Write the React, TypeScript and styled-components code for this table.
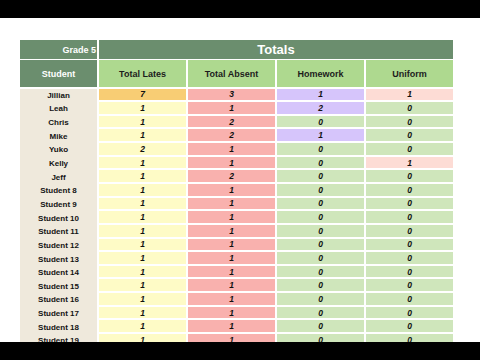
import React from "react";
import styled, { createGlobalStyle } from "styled-components";

type Tone = "yellow" | "orange" | "red" | "purple" | "green" | "pink";

interface Student {
  name: string;
  lates: number;
  absent: number;
  homework: number;
  uniform: number;
}

const tones: Record<Tone, string> = {
  yellow: "#fefbc6",
  orange: "#f8cd74",
  red: "#f9b1ae",
  purple: "#d6c5fb",
  green: "#cfe6bb",
  pink: "#fddcd5",
};

const named: Student[] = [
  { name: "Jillian", lates: 7, absent: 3, homework: 1, uniform: 1 },
  { name: "Leah", lates: 1, absent: 1, homework: 2, uniform: 0 },
  { name: "Chris", lates: 1, absent: 2, homework: 0, uniform: 0 },
  { name: "Mike", lates: 1, absent: 2, homework: 1, uniform: 0 },
  { name: "Yuko", lates: 2, absent: 1, homework: 0, uniform: 0 },
  { name: "Kelly", lates: 1, absent: 1, homework: 0, uniform: 1 },
  { name: "Jeff", lates: 1, absent: 2, homework: 0, uniform: 0 },
];

const students: Student[] = [
  ...named,
  ...Array.from({ length: 12 }, (_, i) => ({
    name: `Student ${i + 8}`,
    lates: 1,
    absent: 1,
    homework: 0,
    uniform: 0,
  })),
];

const GlobalStyle = createGlobalStyle`
  html, body {
    margin: 0;
    padding: 0;
    background: #ffffff;
  }
  body {
    font-family: "Liberation Sans", Arial, sans-serif;
  }
`;

const Screen = styled.div`
  width: 480px;
  height: 360px;
  display: flex;
  flex-direction: column;
  overflow: hidden;
  background: #ffffff;
`;

const Letterbox = styled.div`
  height: 18px;
  flex-shrink: 0;
  background: #000000;
`;

const Viewport = styled.div`
  flex: 1;
  overflow: hidden;
  padding: 22px 0 0 20px;
`;

const Sheet = styled.div`
  width: 433px;
  display: flex;
  flex-direction: column;
`;

const Row = styled.div<{ $h: number }>`
  display: grid;
  grid-template-columns: 77px repeat(4, 1fr);
  column-gap: 2px;
  height: ${(p) => p.$h}px;
`;

const TitleCell = styled.div<{ $align?: string; $size: number }>`
  background: #6b8e6e;
  color: #ffffff;
  font-weight: bold;
  font-size: ${(p) => p.$size}px;
  display: flex;
  align-items: center;
  justify-content: ${(p) => p.$align || "center"};
  padding-right: ${(p) => (p.$align === "flex-end" ? "1px" : "0")};
`;

const SpanCell = styled(TitleCell)`
  grid-column: 2 / 6;
  padding-bottom: 1px;
`;

const HeadCell = styled.div`
  background: #aed98f;
  color: #1c1c1c;
  font-weight: bold;
  font-size: 9px;
  display: flex;
  align-items: center;
  justify-content: center;
`;

const NameCell = styled.div`
  background: #efe9dc;
  color: #141414;
  font-weight: bold;
  font-size: 8px;
  display: flex;
  align-items: center;
  justify-content: center;
`;

const ValueCell = styled.div<{ $tone: Tone }>`
  background: ${(p) => tones[p.$tone]};
  margin-bottom: 2px;
  color: #111111;
  font-weight: bold;
  font-style: italic;
  font-size: 8.5px;
  display: flex;
  align-items: center;
  justify-content: center;
`;

const Spacer = styled.div<{ $h: number }>`
  height: ${(p) => p.$h}px;
`;

const lateTone = (n: number): Tone => (n >= 5 ? "orange" : "yellow");
const flagTone = (n: number, on: Tone): Tone => (n > 0 ? on : "green");

export default function App() {
  return (
    <Screen>
      <GlobalStyle />
      <Letterbox />
      <Viewport>
        <Sheet>
          <Row $h={19}>
            <TitleCell $size={9} $align="flex-end">
              Grade 5
            </TitleCell>
            <SpanCell $size={13}>Totals</SpanCell>
          </Row>
          <Spacer $h={1} />
          <Row $h={27}>
            <TitleCell $size={9}>Student</TitleCell>
            <HeadCell>Total Lates</HeadCell>
            <HeadCell>Total Absent</HeadCell>
            <HeadCell>Homework</HeadCell>
            <HeadCell>Uniform</HeadCell>
          </Row>
          <Spacer $h={1.5} />
          {students.map((s) => (
            <Row key={s.name} $h={13.65}>
              <NameCell>{s.name}</NameCell>
              <ValueCell $tone={lateTone(s.lates)}>{s.lates}</ValueCell>
              <ValueCell $tone="red">{s.absent}</ValueCell>
              <ValueCell $tone={flagTone(s.homework, "purple")}>{s.homework}</ValueCell>
              <ValueCell $tone={flagTone(s.uniform, "pink")}>{s.uniform}</ValueCell>
            </Row>
          ))}
        </Sheet>
      </Viewport>
      <Letterbox />
    </Screen>
  );
}
